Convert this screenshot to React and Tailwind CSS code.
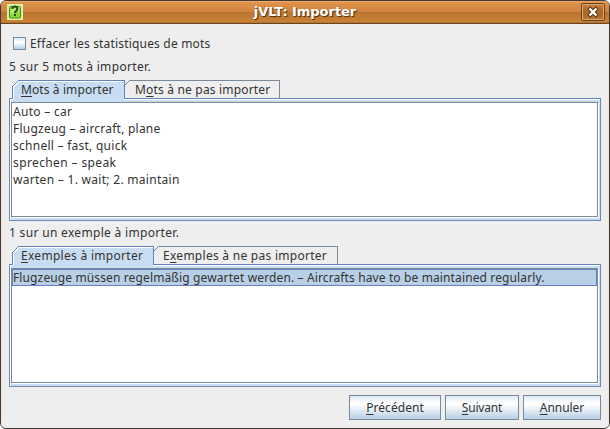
import React from "react";

const words = [
  ["Auto – car", "tracking-[0.3px]"],
  ["Flugzeug – aircraft, plane", "tracking-[0.23px]"],
  ["schnell – fast, quick", "tracking-[0.26px]"],
  ["sprechen – speak", "tracking-[0.38px]"],
  ["warten – 1. wait; 2. maintain", "tracking-[0.29px]"],
];

function Mnemonic({ before = "", letter, after }) {
  return (
    <span className="whitespace-pre">
      {before}
      <span className="underline decoration-1 underline-offset-2">{letter}</span>
      {after}
    </span>
  );
}

function ActiveTab({ className, children }) {
  return (
    <div className={`relative z-10 h-[22px] shrink-0 pl-[9px] leading-[19px] ${className}`}>
      <svg className="absolute inset-0 -z-10 h-full w-full" viewBox="0 0 113 22" preserveAspectRatio="none" shapeRendering="crispEdges">
        <path d="M1 22V7L6 0H113V18H112V22Z" fill="#c8ddf2" />
      </svg>
      <div className="absolute left-[6px] right-0 top-0 -z-10 h-[2px] border-t border-[#6382bf] bg-white" />
      <div className="absolute right-0 top-0 -z-10 h-[19px] w-px bg-[#6382bf]" />
      <svg className="absolute left-0 top-0 -z-10 h-[19px] w-[8px]" viewBox="0 0 8 19" shapeRendering="crispEdges">
        <path d="M0 0H7L0 7Z" fill="#eeeeee" />
        <path d="M0.5 18V6.5L6.5 0.5" fill="none" stroke="#6382bf" />
        <path d="M1.5 19V7L7 1.5" fill="none" stroke="#ffffff" />
      </svg>
      {children}
    </div>
  );
}

function IdleTab({ className, children }) {
  return (
    <div className={`relative h-[18px] shrink-0 border-r border-t border-[#7a8a99] leading-[17px] ${className}`}>
      <svg className="absolute -left-px -top-px h-[7px] w-[6px]" viewBox="0 0 6 7" shapeRendering="crispEdges">
        <path d="M0 0H6L0 6Z" fill="#eeeeee" />
        <path d="M0.5 5.5L5.5 0.5" fill="none" stroke="#7a8a99" />
      </svg>
      {children}
    </div>
  );
}

function Pane({ children }) {
  return (
    <div className="h-[123px] w-[592px] border border-[#6f89b3] border-t-[#6382bf] bg-[#c8ddf2] shadow-[inset_1px_1px_0_#fff]">
      <div className="ml-px mt-[3px] h-[115px] w-[587px] border border-[#7a8a99] bg-white shadow-[1px_1px_0_#fff]">
        {children}
      </div>
    </div>
  );
}

function Button({ className, children }) {
  return (
    <button className={`h-[25px] border border-[#7a8a99] bg-[linear-gradient(#dde8f3_0%,#ffffff_30%,#ffffff_36%,#b8cfe5_100%)] text-center leading-[23px] ${className}`}>
      {children}
    </button>
  );
}

export default function App() {
  return (
    <div className="h-[429px] w-[610px] overflow-hidden bg-white font-['Noto_Sans',sans-serif] text-[12px] text-[#333333]">
      <div className="h-full overflow-hidden rounded-[6px] border border-[#433832] bg-[#eeeeee]">
        <header className="flex h-[23px] items-center border-b border-[#6b4420] bg-[linear-gradient(#f0b070_0%,#de9148_8%,#cf8440_48%,#b97430_52%,#cb8236_95%,#a3672d_100%)] pl-[6px] pr-[4px]">
          <svg className="h-4 w-4" viewBox="0 0 16 16">
            <rect width="16" height="16" fill="#d6f2a5" />
            <rect x="2.5" y="2.5" width="11" height="11.5" rx="1" fill="#8cda35" stroke="#4f8524" />
            <path d="M3.5 3.5H12.5V7L3.5 10Z" fill="#b5ed72" />
            <path d="M5.5 5V3.5Q8 1.5 10 3.3Q11 5.5 8.8 7.3Q8 8 8 9" fill="none" stroke="#28491d" strokeWidth="2" />
            <rect x="7" y="10" width="2" height="2" fill="#28491d" />
          </svg>
          <h1 className="flex-1 pl-[6px] text-center font-['DejaVu_Sans',sans-serif] text-[13px] font-bold leading-[22px] tracking-[-0.04px] text-white [text-shadow:1px_1px_1px_#4b2c10]">
            jVLT: Importer
          </h1>
          <div className="flex h-[18px] w-[24px] items-center justify-center rounded-[2px] border border-[#68421f] bg-[linear-gradient(#c98142,#a76729_50%,#b87533)] shadow-[inset_0_0_0_1px_#dba873]">
            <svg className="h-[12px] w-[12px]" viewBox="0 0 12 12">
              <path d="M3.3 3.3L8.7 8.7M8.7 3.3L3.3 8.7" stroke="#5b3514" strokeWidth="4.2" strokeLinecap="square" />
              <path d="M3.3 3.3L8.7 8.7M8.7 3.3L3.3 8.7" stroke="#ffffff" strokeWidth="2.3" strokeLinecap="square" />
            </svg>
          </div>
        </header>
        <main className="h-[404px] border-x-[2px] border-x-[#f2e9e2] border-b-[2px] border-b-[#e8ddd0] px-[6px]">
          <label className="mt-[11px] flex h-[17px] items-center pl-[4px]">
            <span className="h-[13px] w-[13px] border border-[#7a8a99] bg-[linear-gradient(#dfeaf5,#ffffff_40%,#b8cfe5)]" />
            <span className="whitespace-nowrap pl-[4px] tracking-[0.18px]">Effacer les statistiques de mots</span>
          </label>
          <p className="mt-[6px] h-[17px] leading-[17px] tracking-[0.33px]">5 sur 5 mots à importer.</p>
          <div className="mt-[5px] flex h-[18px] pl-[3px]">
            <ActiveTab className="w-[113px] tracking-[0.1px]"><Mnemonic letter="M" after="ots à importer" /></ActiveTab>
            <IdleTab className="w-[155px] pl-[10px] tracking-[0.18px]"><Mnemonic before="M" letter="o" after="ts à ne pas importer" /></IdleTab>
          </div>
          <Pane>
            <ul className="pl-px">
              {words.map(([text, tracking]) => (
                <li key={text} className={`h-[17px] whitespace-nowrap leading-[17px] ${tracking}`}>{text}</li>
              ))}
            </ul>
          </Pane>
          <p className="mt-[3px] h-[17px] leading-[17px] tracking-[0.32px]">1 sur un exemple à importer.</p>
          <div className="mt-[5px] flex h-[18px] pl-[3px]">
            <ActiveTab className="w-[142px] tracking-[0.29px]"><Mnemonic letter="E" after="xemples à importer" /></ActiveTab>
            <IdleTab className="w-[184px] pl-[9px] tracking-[0.27px]"><Mnemonic before="E" letter="x" after="emples à ne pas importer" /></IdleTab>
          </div>
          <Pane>
            <div className="h-[17px] whitespace-nowrap border border-[#6382bf] bg-[#b8cfe5] leading-[15px] tracking-[0.125px]">
              Flugzeuge müssen regelmäßig gewartet werden. – Aircrafts have to be maintained regularly.
            </div>
          </Pane>
          <div className="mt-[8px] flex justify-end gap-[4px]">
            <Button className="w-[92px] tracking-[0.05px]"><Mnemonic letter="P" after="récédent" /></Button>
            <Button className="w-[74px] tracking-[-0.2px]"><Mnemonic letter="S" after="uivant" /></Button>
            <Button className="w-[78px] tracking-[-0.07px]"><Mnemonic letter="A" after="nnuler" /></Button>
          </div>
        </main>
      </div>
    </div>
  );
}
